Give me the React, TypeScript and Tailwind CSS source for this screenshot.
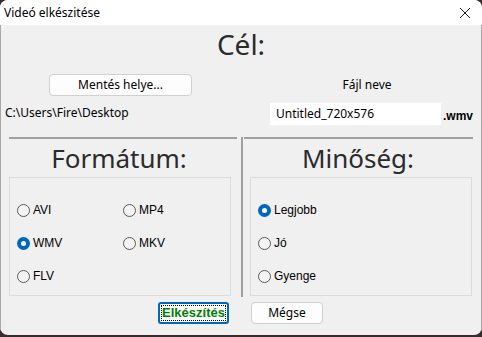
import React from "react";

const ui = { fontFamily: '"Noto Sans", "Open Sans", sans-serif' };
const ms = { fontFamily: '"Liberation Sans", Arial, sans-serif' };

function Radio({ label, checked }: { label: string; checked?: boolean }) {
  return (
    <div className="flex items-center h-[16px]" style={ms}>
      {checked ? (
        <span className="w-[13px] h-[13px] rounded-full bg-[#0067c0] flex items-center justify-center">
          <span className="w-[5px] h-[5px] rounded-full bg-white" />
        </span>
      ) : (
        <span className="w-[13px] h-[13px] rounded-full border border-[#5a5a5a] bg-[#f3f3f3]" />
      )}
      <span className="ml-[3px] text-[12px] text-black leading-none">{label}</span>
    </div>
  );
}

export default function App() {
  return (
    <div className="w-[482px] h-[337px] bg-[#3b2b2c] overflow-hidden">
      <div className="w-[482px] h-[335px] rounded-[8px] overflow-hidden flex flex-col bg-[#f0f0f0]">
        {/* Title bar */}
        <div className="h-[26px] bg-white flex items-center justify-between pl-[4px] pr-[10px]">
          <span className="text-[12px] text-black" style={ui}>Videó elkészitése</span>
          <svg width="12" height="12" viewBox="0 0 12 12" className="mr-[1px]">
            <path d="M1 1 L11 11 M11 1 L1 11" stroke="#1a1a1a" strokeWidth="1" />
          </svg>
        </div>
        {/* Content */}
        <div className="flex-1 flex flex-col border-x border-[#a8a8a8]">
          <div className="h-[38px] flex items-center justify-center text-[28px] text-[#2b2b2b]" style={ui}>
            Cél:
          </div>
          <div className="h-[74px] flex">
            <div className="w-[240px] flex flex-col">
              <button
                className="mt-[11px] ml-[48px] w-[143px] h-[22px] rounded-[4px] border border-[#d0d0d0] bg-[#fdfdfd] text-[12px] text-black flex items-center justify-center"
                style={ui}
              >
                Mentés helye...
              </button>
              <div className="mt-[9px] ml-[4px] h-[16px] flex items-center text-[12px] text-black" style={ui}>
                C:\Users\Fire\Desktop
              </div>
            </div>
            <div className="flex-1 flex flex-col">
              <div className="mt-[14px] h-[16px] pl-[52px] w-[200px] flex items-center justify-center text-[12px] text-black" style={ui}>
                Fájl neve
              </div>
              <div className="mt-[10px] flex items-end">
                <div
                  className="ml-[29px] w-[171px] h-[22px] bg-white flex items-center pl-[6px] text-[12px] text-black"
                  style={ui}
                >
                  Untitled_720x576
                </div>
                <span className="ml-[2px] mb-[3px] text-[12px] font-bold text-black leading-none" style={ms}>
                  .wmv
                </span>
              </div>
            </div>
          </div>
          <div className="flex flex-1">
            <div className="w-[240px] flex flex-col">
              <div className="ml-[8px] w-[228px] h-[2px] bg-[#a0a0a0]" />
              <div className="h-[38px] flex items-center justify-center text-[26px] text-[#2b2b2b] pr-[4px]" style={ui}>
                Formátum:
              </div>
              <div className="ml-[8px] w-[222px] h-[119px] border border-[#dcdcdc] pt-[24px] pl-[7px] grid grid-cols-[106px_1fr] gap-y-[17px] content-start">
                <Radio label="AVI" />
                <Radio label="MP4" />
                <Radio label="WMV" checked />
                <Radio label="MKV" />
                <Radio label="FLV" />
              </div>
            </div>
            <div className="w-[2px] h-[160px] bg-[#a0a0a0]" />
            <div className="flex-1 flex flex-col">
              <div className="ml-[1px] w-[229px] h-[2px] bg-[#a0a0a0]" />
              <div className="h-[38px] flex items-center justify-center text-[26px] text-[#2b2b2b] pr-[8px]" style={ui}>
                Minőség:
              </div>
              <div className="ml-[7px] w-[222px] h-[119px] border border-[#dcdcdc] pt-[24px] pl-[7px] flex flex-col gap-y-[17px]">
                <Radio label="Legjobb" checked />
                <Radio label="Jó" />
                <Radio label="Gyenge" />
              </div>
            </div>
          </div>
          <div className="h-[38px] flex items-start pt-[5px]">
            <button className="ml-[157px] w-[71px] h-[22px] rounded-[3px] border-2 border-[#0067c0] bg-[#fdfdfd] p-[1px]">
              <span
                className="w-full h-full border border-dotted border-black flex items-center justify-center text-[13px] font-bold text-[#008000]"
                style={ms}
              >
                Elkészítés
              </span>
            </button>
            <button
              className="ml-[22px] w-[72px] h-[22px] rounded-[4px] border border-[#d0d0d0] bg-[#fdfdfd] text-[12px] text-black flex items-center justify-center"
              style={ui}
            >
              Mégse
            </button>
          </div>
        </div>
      </div>
    </div>
  );
}
